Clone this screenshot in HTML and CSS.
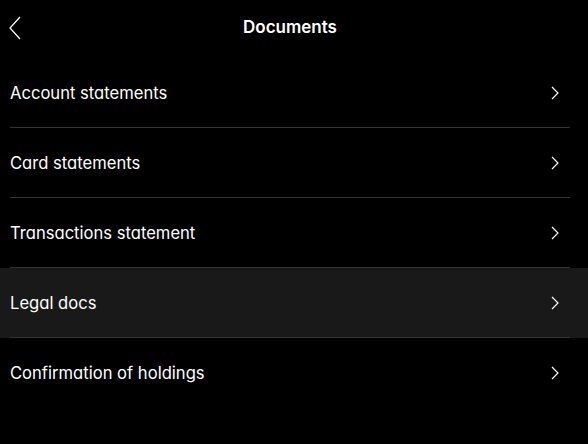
FILE: index.html
```html
<!DOCTYPE html>
<html lang="en">
<head>
    <meta charset="UTF-8">
    <meta name="viewport" content="width=device-width, initial-scale=1.0">
    <title>Documents</title>
    <link rel="stylesheet" href="styles.css">
</head>
<body>
<header class="top-bar">
    <button class="back-btn" aria-label="Back">
        <svg width="12" height="24" viewBox="0 0 12 24"><path d="M11 1 L1 12 L11 23" fill="none" stroke="#fff" stroke-width="1.2"/></svg>
    </button>
    <h1>Documents</h1>
</header>
<ul class="doc-list">
    <li class="doc-item"><span>Account statements</span><svg class="chev" width="8" height="14" viewBox="0 0 8 14"><path d="M1 1 L7 7 L1 13" fill="none" stroke="#fff" stroke-width="1.2"/></svg></li>
    <li class="doc-item"><span>Card statements</span><svg class="chev" width="8" height="14" viewBox="0 0 8 14"><path d="M1 1 L7 7 L1 13" fill="none" stroke="#fff" stroke-width="1.2"/></svg></li>
    <li class="doc-item"><span>Transactions statement</span><svg class="chev" width="8" height="14" viewBox="0 0 8 14"><path d="M1 1 L7 7 L1 13" fill="none" stroke="#fff" stroke-width="1.2"/></svg></li>
    <li class="doc-item active"><span>Legal docs</span><svg class="chev" width="8" height="14" viewBox="0 0 8 14"><path d="M1 1 L7 7 L1 13" fill="none" stroke="#fff" stroke-width="1.2"/></svg></li>
    <li class="doc-item"><span>Confirmation of holdings</span><svg class="chev" width="8" height="14" viewBox="0 0 8 14"><path d="M1 1 L7 7 L1 13" fill="none" stroke="#fff" stroke-width="1.2"/></svg></li>
</ul>
</body>
</html>
```

FILE: styles.css
```css
body {
    font-family: Inter, 'Noto Sans', sans-serif;
    font-feature-settings: "cv11";
    background-color: #000000;
    color: #FFFFFF;
    margin: 0;
    padding: 0;
}

.top-bar {
    position: relative;
    height: 58px;
    display: flex;
    align-items: center;
    justify-content: center;
}

.top-bar h1 {
    margin: -4px 8px 0 0;
    font-size: 17px;
    font-weight: 600;
}

.back-btn {
    position: absolute;
    left: 9px;
    top: 16px;
    background: none;
    border: none;
    padding: 0;
    cursor: pointer;
    display: flex;
}

.doc-list {
    list-style: none;
    margin: 0;
    padding: 0;
}

.doc-item {
    height: 70px;
    box-sizing: border-box;
    display: flex;
    align-items: center;
    justify-content: space-between;
    padding: 0 29px 1px 10px;
    font-size: 16.6px;
    position: relative;
}

.doc-item .chev {
    margin-top: 1px;
}

.doc-item::after {
    content: "";
    position: absolute;
    left: 10px;
    right: 18px;
    bottom: 0;
    height: 1px;
    background-color: #333333;
}

.doc-item:last-child::after {
    display: none;
}

.doc-item.active {
    background-color: #191919;
}
```
